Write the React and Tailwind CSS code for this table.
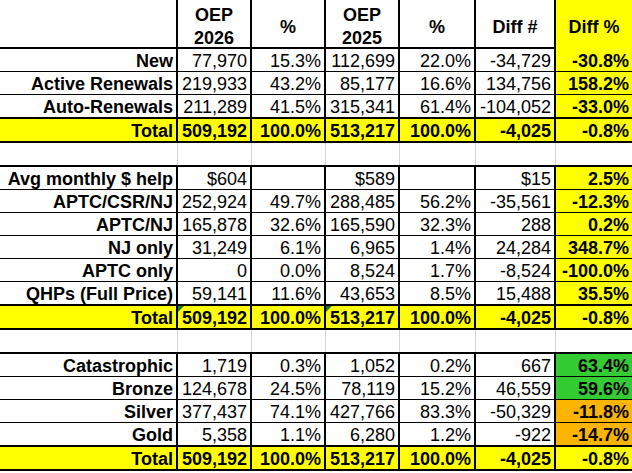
import React from 'react';

const GRID = 'grid grid-cols-[178px_74px_74px_74px_76px_80px_76px]';

const TOTAL = ['Total', '509,192', '100.0%', '513,217', '100.0%', '-4,025', '-0.8%'];

const sections = [
  {
    rows: [
      { cells: ['New', '77,970', '15.3%', '112,699', '22.0%', '-34,729', '-30.8%'] },
      { cells: ['Active Renewals', '219,933', '43.2%', '85,177', '16.6%', '134,756', '158.2%'] },
      { cells: ['Auto-Renewals', '211,289', '41.5%', '315,341', '61.4%', '-104,052', '-33.0%'] },
    ],
  },
  {
    rows: [
      { cells: ['Avg monthly $ help', '$604', '', '$589', '', '$15', '2.5%'] },
      { cells: ['APTC/CSR/NJ', '252,924', '49.7%', '288,485', '56.2%', '-35,561', '-12.3%'] },
      { cells: ['APTC/NJ', '165,878', '32.6%', '165,590', '32.3%', '288', '0.2%'] },
      { cells: ['NJ only', '31,249', '6.1%', '6,965', '1.4%', '24,284', '348.7%'] },
      { cells: ['APTC only', '0', '0.0%', '8,524', '1.7%', '-8,524', '-100.0%'] },
      { cells: ['QHPs (Full Price)', '59,141', '11.6%', '43,653', '8.5%', '15,488', '35.5%'] },
    ],
    flagged: true,
  },
  {
    rows: [
      { cells: ['Catastrophic', '1,719', '0.3%', '1,052', '0.2%', '667', '63.4%'], fill: 'bg-[#33cc33]' },
      { cells: ['Bronze', '124,678', '24.5%', '78,119', '15.2%', '46,559', '59.6%'], fill: 'bg-[#33cc33]' },
      { cells: ['Silver', '377,437', '74.1%', '427,766', '83.3%', '-50,329', '-11.8%'], fill: 'bg-[#fbb400]' },
      { cells: ['Gold', '5,358', '1.1%', '6,280', '1.2%', '-922', '-14.7%'], fill: 'bg-[#fbb400]' },
    ],
  },
];

function Flag() {
  return (
    <span className="absolute left-0 top-0 w-0 h-0 border-t-[6px] border-r-[6px] border-t-[#1e7b1e] border-r-transparent" />
  );
}

function DataRow({ cells, fill = 'bg-[#ffff00]', thick, total, flagged }) {
  const rowCls = thick ? 'h-[24px] border-b-2' : 'h-[23px] border-b';
  return (
    <div className={`${GRID} ${rowCls} border-black ${total ? 'bg-[#ffff00]' : 'bg-white'}`}>
      {cells.map((c, i) => {
        const last = i === cells.length - 1;
        const bold = total || i === 0 || last;
        return (
          <div
            key={i}
            className={`relative overflow-hidden whitespace-nowrap text-right px-[3px] leading-[24px] ${
              last ? (total ? '' : fill) : 'border-r-2 border-black'
            } ${bold ? 'font-bold' : ''}`}
          >
            {flagged && (i === 1 || i === 3) && <Flag />}
            {c}
          </div>
        );
      })}
    </div>
  );
}

function BlankRow() {
  return (
    <div className={`${GRID} h-[24px] border-b-2 border-black bg-white`}>
      {[0, 1, 2, 3, 4, 5, 6].map((i) => (
        <div key={i} className={i === 6 ? '' : 'border-r border-[#d4d4d4]'} />
      ))}
    </div>
  );
}

export default function App() {
  const heads = ['', 'OEP\n2026', '%', 'OEP\n2025', '%', 'Diff #', 'Diff %'];
  return (
    <div className="w-[632px] h-[473px] overflow-hidden bg-white text-black text-[18px] font-['Liberation_Sans',Arial,sans-serif]">
      <div className={`${GRID} h-[49px] border-b-2 border-black`}>
        {heads.map((h, i) => (
          <div
            key={i}
            className={`flex items-center justify-center text-center font-bold leading-[23px] pt-[4px] whitespace-pre ${
              i === 6 ? 'bg-[#ffff00]' : 'border-r-2 border-black'
            }`}
          >
            {h}
          </div>
        ))}
      </div>
      {sections.map((s, si) => (
        <React.Fragment key={si}>
          {s.rows.map((r, ri) => (
            <DataRow key={ri} cells={r.cells} fill={r.fill} thick={ri === s.rows.length - 1} />
          ))}
          <DataRow cells={TOTAL} total thick flagged={s.flagged} />
          {si < sections.length - 1 && <BlankRow />}
        </React.Fragment>
      ))}
    </div>
  );
}
